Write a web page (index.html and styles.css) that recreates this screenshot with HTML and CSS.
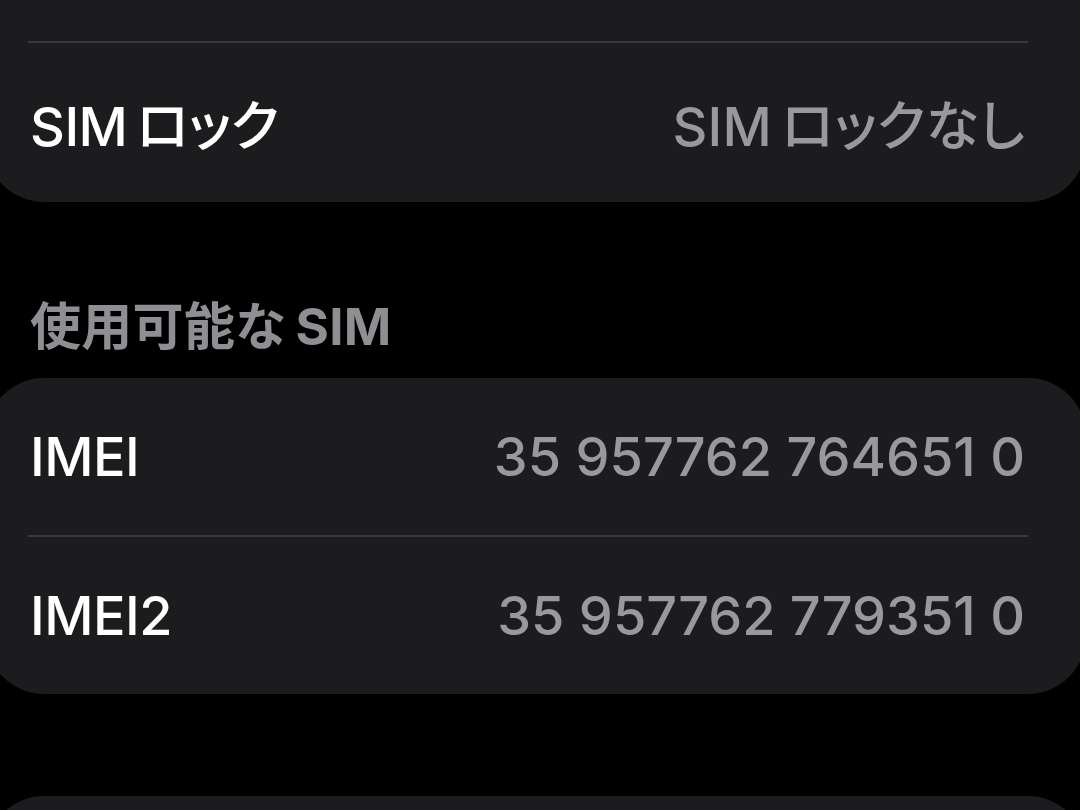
FILE: index.html
```html
<!DOCTYPE html>
<html lang="ja">
<head>
<meta charset="utf-8">
<link rel="stylesheet" href="styles.css">
</head>
<body>
<div class="screen">
  <div class="card card-first">
    <div class="sep"></div>
    <div class="row">
      <span class="label"><span class="latin">SIM</span>ロック</span>
      <span class="value"><span class="latin">SIM</span>ロックなし</span>
    </div>
  </div>

  <div class="section-header">使用可能な<span class="latin-pre">SIM</span></div>

  <div class="card">
    <div class="row">
      <span class="label">IMEI</span>
      <span class="value num">35 957762 764651 0</span>
    </div>
    <div class="sep"></div>
    <div class="row">
      <span class="label">IMEI2</span>
      <span class="value num">35 957762 779351 0</span>
    </div>
  </div>

  <div class="card card-last"></div>
</div>
</body>
</html>
```

FILE: styles.css
```css
html, body {
  margin: 0;
  padding: 0;
  background: #000;
}

.screen {
  width: 1080px;
  height: 810px;
  overflow: hidden;
  background: #000;
  font-family: "Inter", "Noto Sans CJK JP", sans-serif;
  -webkit-font-smoothing: antialiased;
}

.card {
  background: #1c1c1e;
  margin: 0 -6px 0 -14px;
  border-radius: 58px;
  display: flex;
  flex-direction: column;
}

.card-first {
  border-radius: 0 0 58px 58px;
  padding-top: 41px;
}

.card-last {
  margin-top: 102px;
  height: 120px;
  border-radius: 58px 58px 0 0;
}

.sep {
  height: 2px;
  background: #38383a;
  margin: 0 58px 0 42px;
}

.row {
  display: flex;
  align-items: center;
  justify-content: space-between;
  height: 157px;
  padding: 0 61px 0 44px;
}

.card-first .row {
  height: 159px;
}

.label {
  color: #ffffff;
  font-size: 54px;
  font-weight: 500;
  letter-spacing: -0.5px;
  font-feature-settings: "palt";
}

.value {
  color: #98989e;
  font-size: 54px;
  font-weight: 500;
  letter-spacing: 0.3px;
  font-feature-settings: "palt";
}

.latin {
  margin-right: 9px;
}

.latin-pre {
  margin-left: 9px;
}

.num {
  letter-spacing: 0;
}

.section-header {
  height: 176px;
  display: flex;
  align-items: flex-end;
  box-sizing: border-box;
  padding: 0 0 21px 30px;
  color: #8e8e93;
  font-size: 51px;
  font-weight: 700;
  line-height: 60px;
  letter-spacing: 0.3px;
}
```
